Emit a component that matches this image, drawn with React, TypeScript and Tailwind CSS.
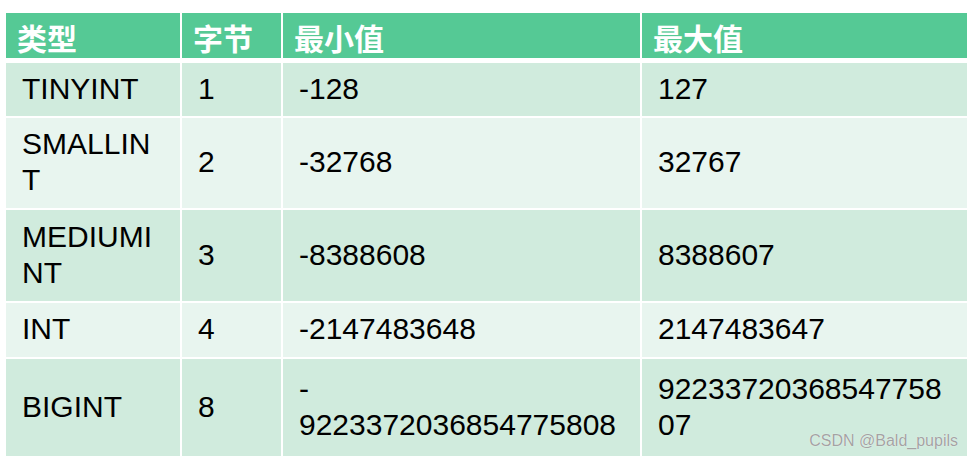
import React from "react";

type Row = {
  name: React.ReactNode;
  bytes: string;
  min: React.ReactNode;
  max: React.ReactNode;
  h: string;
  bg: string;
};

const rows: Row[] = [
  { name: "TINYINT", bytes: "1", min: "-128", max: "127", h: "h-[53px]", bg: "bg-[#d0ebdd]" },
  {
    name: (
      <>
        SMALLIN
        <br />T
      </>
    ),
    bytes: "2",
    min: "-32768",
    max: "32767",
    h: "h-[90px]",
    bg: "bg-[#e8f5ef]",
  },
  {
    name: (
      <>
        MEDIUMI
        <br />
        NT
      </>
    ),
    bytes: "3",
    min: "-8388608",
    max: "8388607",
    h: "h-[91px]",
    bg: "bg-[#d0ebdd]",
  },
  { name: "INT", bytes: "4", min: "-2147483648", max: "2147483647", h: "h-[54px]", bg: "bg-[#e8f5ef]" },
  {
    name: "BIGINT",
    bytes: "8",
    min: (
      <>
        -
        <br />
        9223372036854775808
      </>
    ),
    max: (
      <>
        92233720368547758
        <br />
        07
      </>
    ),
    h: "h-[97px]",
    bg: "bg-[#d0ebdd]",
  },
];

const headers = ["类型", "字节", "最小值", "最大值"];

export default function App() {
  return (
    <div className="w-[975px] h-[462px] bg-white pt-[13px] pl-[6px] font-['Liberation_Sans',Arial,sans-serif]">
      <div className="relative w-[961px] flex flex-col gap-[2px]">
        {/* header */}
        <div className="grid grid-cols-[174px_99px_357px_325px] gap-x-[2px] h-[45px] mb-[3px]">
          {headers.map((t) => (
            <div
              key={t}
              className="bg-[#55c995] flex items-center pl-[11px] pt-[3px] text-white font-bold text-[30px] leading-none font-['Noto_Sans_CJK_SC',sans-serif]"
            >
              {t}
            </div>
          ))}
        </div>

        {rows.map((r, i) => (
          <div key={i} className={`grid grid-cols-[174px_99px_357px_325px] gap-x-[2px] ${r.h}`}>
            {[r.name, r.bytes, r.min, r.max].map((c, j) => (
              <div
                key={j}
                className={`${r.bg} flex items-center pl-[16px] pb-[2px] text-black text-[30px] leading-[36px]`}
              >
                <div>{c}</div>
              </div>
            ))}
          </div>
        ))}

        {/* watermark */}
        <div className="absolute right-[9px] bottom-[3px] text-[16px] text-[#a3a3a3] [text-shadow:0_0_1px_#ffffff]">
          CSDN @Bald_pupils
        </div>
      </div>
    </div>
  );
}
